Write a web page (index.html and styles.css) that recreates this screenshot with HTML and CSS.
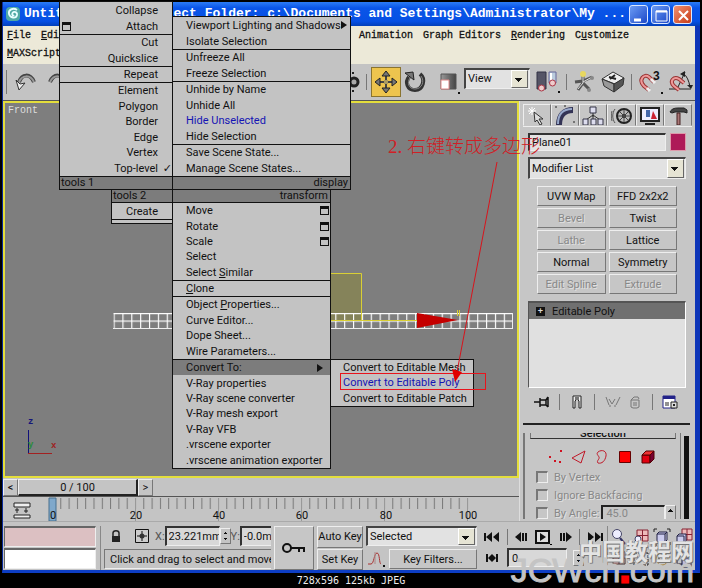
FILE: index.html
```html
<!DOCTYPE html>
<html lang="en">
<head>
<meta charset="utf-8">
<title>Untitled - Project Folder</title>
<link rel="stylesheet" href="styles.css">
</head>
<body>
<div class="window">
  <header class="titlebar">
    <svg class="logo" width="16" height="16" viewBox="0 0 16 16"><rect x="1" y="1" width="14" height="14" rx="4" fill="#4fa9a5"/><path d="M12 4C8 1 3 4 4 8c1 4 7 5 8 1 .5-3-3-4-4.500-2-1 2 .5 3 1.500 2" fill="none" stroke="#e8ffff" stroke-width="1.800"/></svg>
    <span class="title-file">Untit</span>
    <span class="title-path">ject Folder: c:\Documents and Settings\Administrator\My ...</span>
    <button class="win-btn" aria-label="Minimize"><svg width="19" height="19"><path d="M4 14h7" stroke="#fff" stroke-width="3"/></svg></button>
    <button class="win-btn" aria-label="Maximize"><svg width="19" height="19"><path d="M4 5h11v10H4z" fill="none" stroke="#fff"/><path d="M4 5.500h11" stroke="#fff" stroke-width="2"/></svg></button>
    <button class="win-btn close" aria-label="Close"><svg width="19" height="19"><path d="M5 5l9 9M14 5l-9 9" stroke="#fff" stroke-width="2"/></svg></button>
  </header>
  <nav class="menubar">
    <div class="menus menus-left">
      <a href="#"><u>F</u>ile</a><a href="#"><u>E</u>dit</a><a href="#" class="wrap"><u>M</u>AXScript</a>
    </div>
    <div class="menus"><a href="#">Animation</a><a href="#">Graph Editors</a><a href="#"><u>R</u>endering</a><a href="#">C<u>u</u>stomize</a></div>
  </nav>
  <div class="toolbar">
    <div class="tools-left">
      <button class="tool" aria-label="Undo"><svg width="24" height="24" viewBox="0 0 24 24"><path d="M5 12C8 4 16 3 20 12" fill="none" stroke="#444" stroke-width="4"/><path d="M5 12C8 5 16 4 20 12" fill="none" stroke="#999" stroke-width="2"/><path d="M2 10l3 10 6-7-5 1z" fill="#eee" stroke="#333"/></svg></button>
      <button class="tool" aria-label="Redo"><svg width="24" height="24" viewBox="0 0 24 24"><path d="M3 12C7 3 15 4 18 12" fill="none" stroke="#444" stroke-width="4"/><path d="M3 12C7 4 15 5 18 12" fill="none" stroke="#999" stroke-width="2"/><path d="M21 10l-3 10-6-7 5 1z" fill="#eee" stroke="#333"/></svg></button>
    </div>
    <svg class="gear" width="14" height="24" viewBox="0 0 14 24"><circle cx="6" cy="12" r="4" fill="#aaa" stroke="#222" stroke-width="3"/><path d="M0 3h2M4 3h2M0 21h2M4 21h2" stroke="#222" stroke-width="2"/></svg>
    <i class="sep"></i>
    <button class="tool active" aria-label="Select and Move"><svg width="24" height="24" viewBox="0 0 24 24"><path d="M12 3v18M3 12h18" stroke="#444" stroke-width="2"/><path d="M12 1l4 5H8zM12 23l4-5H8zM1 12l5-4v8zM23 12l-5-4v8z" fill="#777" stroke="#222"/><path d="M10 10h4v4h-4z" fill="#aa9a60"/></svg></button>
    <button class="tool" aria-label="Select and Rotate"><svg width="24" height="24" viewBox="0 0 24 24"><path d="M17 4c6 5 3 16-5 16S2 12 6 7" fill="none" stroke="#333" stroke-width="4"/><path d="M18 6c4 5 1 13-6 13S4 12 7 8" fill="none" stroke="#888"/><path d="M2 3l8-1 1 8z" fill="#777" stroke="#222"/></svg></button>
    <button class="tool scale" aria-label="Select and Scale"><svg width="24" height="24" viewBox="0 0 24 24"><defs><linearGradient id="g1"><stop offset="0" stop-color="#999"/><stop offset="1" stop-color="#444"/></linearGradient></defs><path d="M4 4h15v15H4z" fill="url(#g1)" stroke="#555"/><path d="M4 10h8v9H4z" fill="#fff" stroke="#d88"/><path d="M21 22h2v2h-2z" fill="#111"/></svg></button>
    <label class="combo view"><select aria-label="Reference Coordinate System"><option>View</option></select></label>
    <button class="tool" aria-label="Pivot Center"><svg width="24" height="24" viewBox="0 0 24 24"><path d="M1 2h9v17H1z" fill="#556" stroke="#334"/><path d="M13 2h7v11h-7z" fill="#bcd" stroke="#669"/><path d="M15 3v9" stroke="#fff" stroke-width="2"/><circle cx="5.500" cy="18" r="3" fill="#ecc" stroke="#a34"/><circle cx="16.500" cy="13" r="3" fill="#ecc" stroke="#a34"/><path d="M22 21h2v2h-2z" fill="#111"/></svg></button>
    <i class="sep"></i>
    <button class="tool" aria-label="Manipulate"><svg width="24" height="24" viewBox="0 0 24 24"><path d="M10 4v9l-5 7M10 13l6 6M2 12l8-1 9-4" fill="none" stroke="#555" stroke-width="3"/><path d="M10 5v8l-5 6M10 12l9-5" fill="none" stroke="#ddd"/><circle cx="10" cy="4" r="3" fill="#e8d860"/><circle cx="19" cy="8" r="2" fill="#888"/><circle cx="16" cy="20" r="2" fill="#888"/></svg></button>
    <button class="tool" aria-label="Keyboard Override"><svg width="24" height="24" viewBox="0 0 24 24"><path d="M1 9l11-7 11 6-9 6z" fill="#eee" stroke="#333"/><path d="M1 9l12 5v8L3 16z" fill="#999" stroke="#333"/><path d="M13 14l10-6-1 7-9 7z" fill="#555" stroke="#333"/><path d="M8 7l7 2M14 5l-5 4" stroke="#222" stroke-width="2"/></svg></button>
    <i class="sep"></i>
    <button class="tool" aria-label="Snaps Toggle"><svg width="26" height="24" viewBox="0 0 26 24"><path d="M11 20l-5-4C0 10 6 3 11 7l5 5" fill="none" stroke="#933" stroke-width="4"/><path d="M11 20l-5-4C0 10 6 3 11 7l5 5" fill="none" stroke="#e99" stroke-width="2"/><path d="M13 9l4 4M9 18l3 3" stroke="#eee" stroke-width="3"/><text x="15" y="10" class="snap3">3</text><path d="M23 22h2v2h-2z" fill="#111"/></svg></button>
    <button class="tool" aria-label="Angle Snap"><svg width="26" height="24" viewBox="0 0 26 24"><path d="M1 19h22M10 17L17 2M15 3c4 3 6 8 7 14" fill="none" stroke="#222"/><path d="M11 20l-5-4C1 11 6 6 11 9l5 4" fill="none" stroke="#933" stroke-width="4"/><path d="M11 20l-5-4C1 11 6 6 11 9l5 4" fill="none" stroke="#e99" stroke-width="2"/><path d="M12 4l5-3v6zM19 15l6 0-2 4z" fill="#222"/></svg></button>
  </div>

  <div class="main">
    <div class="left">
      <section class="viewport">
        <span class="vp-name">Front</span>
        <svg class="scene" width="512" height="374" viewBox="5 103 512 374">
          <defs><pattern id="cells" x="113.500" y="313" width="8.870" height="7.500" patternUnits="userSpaceOnUse"><path d="M0 .5h8.870M.5 0v7.500" stroke="#fff" stroke-width="1.300" fill="none"/></pattern></defs>
          <path d="M300 273.500h61.500v47H300z" fill="#85835a" stroke="#d9cf35"/>
          <path d="M113.500 313h399v15h-399z" fill="url(#cells)"/>
          <path d="M113 328.500h400M512.500 313v15" stroke="#eee"/>
          <path d="M331 320.500h86M361.500 313v8M457.500 310v6M459.500 310v6" stroke="#d9cf35"/>
          <path d="M417 313v15l41-8z" fill="#c40000"/>
          <path d="M28.500 430v23" stroke="#11117a"/><path d="M28 453.500h24" stroke="#a32020"/>
          <text x="28" y="424" class="axis z">z</text><text x="28" y="447" class="axis y">y</text><text x="51" y="448" class="axis x">x</text>
        </svg>
      </section>
      <div class="slider"><button>&lt;</button><button class="thumb">0 / 100</button><button>&gt;</button></div>
      <div class="ruler">
        <svg width="510" height="25" viewBox="4 497 510 25">
          <defs><pattern id="ticks" x="53" y="498" width="8.300" height="11" patternUnits="userSpaceOnUse"><path d="M.5 0v11" stroke="#777"/></pattern></defs>
          <path d="M15 503h16v4H15zM15 515h16v3H15z" fill="#eee" stroke="#222"/><path d="M18 508v5M16 510h4M27 508v5M25 511h4" stroke="#222"/>
          <path d="M53 498h417v11H53z" fill="url(#ticks)"/>
          <path d="M136.500 498v23M219.500 498v23M302.500 498v23M385.500 498v23M468.500 498v23" stroke="#999"/>
          <path d="M50 498h7v23h-7z" fill="#7fa8cb" stroke="#48708f"/>
          <g class="nums"><text x="54" y="519">0</text><text x="137" y="519">20</text><text x="220" y="519">40</text><text x="303" y="519">60</text><text x="387" y="519">80</text><text x="469" y="519">100</text></g>
        </svg>
      </div>
    </div>

    <aside class="panel">
      <div class="tabs">
        <button aria-label="Create"><svg width="22" height="22" viewBox="0 0 22 22"><path d="M6 2v8M2 6h8M3 3l6 6M9 3L3 9" stroke="#fff"/><path d="M8 7l9 7-4 0 3 5-2 1-3-5-2 2z" fill="#ddd" stroke="#333"/></svg></button>
        <button class="on" aria-label="Modify"><svg width="22" height="22" viewBox="0 0 22 22"><path d="M5 20C5 10 10 5 19 5" fill="none" stroke="#335" stroke-width="6"/><path d="M4 19C4 9 9 4 18 4" fill="none" stroke="#9ac" stroke-width="2"/><path d="M1 2h2M10 1h2M19 17h2" stroke="#222"/></svg></button>
        <button aria-label="Hierarchy"><svg width="22" height="22" viewBox="0 0 22 22"><path d="M11 8v4M4 15l7-5 7 5M11 10v6" fill="none" stroke="#333"/><path d="M8 2h6v6H8zM1 14h5v6H1zM9 14h5v6H9zM16 14h5v6h-5z" fill="#dde" stroke="#334"/></svg></button>
        <button aria-label="Motion"><svg width="22" height="22" viewBox="0 0 22 22"><circle cx="13" cy="11" r="7" fill="#bbb" stroke="#222" stroke-width="2"/><circle cx="13" cy="11" r="2" fill="#222"/><path d="M13 5v12M7 11h12M9 7l8 8M17 7l-8 8" stroke="#444"/><path d="M4 4c-3 4-3 10 0 14M1 6c-1 3-1 7 0 10" fill="none" stroke="#555"/></svg></button>
        <button aria-label="Display"><svg width="22" height="22" viewBox="0 0 22 22"><path d="M2 3h18v13H2z" fill="#eef" stroke="#222" stroke-width="2"/><path d="M6 19h10" stroke="#222" stroke-width="2"/><path d="M7 5h4v7H7z" fill="#46a"/><path d="M14 6l4 8h-6z" fill="#c23"/></svg></button>
        <button aria-label="Utilities"><svg width="22" height="22" viewBox="0 0 22 22"><path d="M3 7c2-4 6-4 9-4h5l3 2v3l-3-1H8L5 8z" fill="#444" stroke="#222"/><path d="M10 8h3v12h-3z" fill="#a77" stroke="#422"/></svg></button>
      </div>
      <div class="namerow"><input aria-label="Object name" value="Plane01"><button class="swatch" aria-label="Object color"></button></div>
      <label class="combo mod"><select aria-label="Modifier List"><option>Modifier List</option></select></label>
      <div class="modset">
        <button>UVW Map</button><button>FFD 2x2x2</button>
        <button disabled>Bevel</button><button>Twist</button>
        <button disabled>Lathe</button><button>Lattice</button>
        <button>Normal</button><button>Symmetry</button>
        <button disabled>Edit Spline</button><button disabled>Extrude</button>
      </div>
      <div class="stack"><div class="stack-row"><span class="plus">+</span>Editable Poly</div></div>
      <div class="stacktools">
        <button aria-label="Pin Stack"><svg width="18" height="16" viewBox="0 0 18 16"><path d="M1 8h6M7 4v9M7 6h6v5H7M15 3v10M13 6l2-3M13 11l2 2" fill="none" stroke="#111" stroke-width="1.500"/></svg></button><i class="sep"></i>
        <button aria-label="Show End Result"><svg width="18" height="16" viewBox="0 0 18 16"><path d="M5 2h8v12h-2V7L9 5 7 7v7H5z" fill="#eee" stroke="#222"/><path d="M7 3h4v3H7z" fill="#777"/></svg></button><i class="sep"></i>
        <button aria-label="Make Unique"><svg width="18" height="16" viewBox="0 0 18 16"><path d="M2 3l3 8M16 3l-4 8M5 5l3 5 3-5M5 12h2M10 12h2" fill="none" stroke="#777"/></svg></button>
        <button aria-label="Remove Modifier"><svg width="18" height="16" viewBox="0 0 18 16"><path d="M5 6h8v7l-2 1H7l-2-1zM5 6l3-3h4l1 2M7 9h4M7 11h4" fill="none" stroke="#777"/></svg></button><i class="sep"></i>
        <button aria-label="Configure Modifier Sets"><svg width="18" height="16" viewBox="0 0 18 16"><path d="M2 2h12v12H2z" fill="#fff" stroke="#228"/><path d="M2 3.500h12" stroke="#228" stroke-width="3"/><path d="M4 9h4M4 11h4M10 8h6v6h-6z" fill="#ddd" stroke="#222"/><path d="M12 10h2v2h-2z" fill="#222"/></svg></button>
      </div>
      <div class="rollouts">
        <div class="rollout">
          <h2>Selection</h2>
          <div class="subobj">
            <button aria-label="Vertex"><svg width="16" height="16"><path d="M1 7h2v2H1zM12 1h2v2h-2zM6 11h2v2H6zM11 12h2v2h-2z" fill="#d01020"/></svg></button>
            <button aria-label="Edge"><svg width="16" height="16"><path d="M1 9L14 2l-4 12z" fill="none" stroke="#c01828"/></svg></button>
            <button aria-label="Border"><svg width="16" height="16"><path d="M4 3c4-3 9-1 8 4s-4 8-8 7c-2-2 2-4 1-6S2 5 4 3z" fill="none" stroke="#c01828"/></svg></button>
            <button aria-label="Polygon"><svg width="16" height="16"><path d="M2.500 2.500h11v11h-11z" fill="#f00" stroke="#600"/></svg></button>
            <button aria-label="Element"><svg width="16" height="16"><path d="M2 6h8v8H2z" fill="#e00010" stroke="#500"/><path d="M2 6l4-4h8l-4 4z" fill="#e33" stroke="#500"/><path d="M10 6l4-4v8l-4 4z" fill="#703" stroke="#500"/></svg></button>
          </div>
          <label class="check"><input type="checkbox" disabled>By Vertex</label>
          <label class="check"><input type="checkbox" disabled>Ignore Backfacing</label>
          <div class="check"><input type="checkbox" id="ang" disabled><label for="ang">By Angle:</label><input class="spin" aria-label="Angle" value="45.0" disabled><span class="arrows"></span></div>
        </div>
        <div class="scroll"></div>
      </div>
    </aside>
  </div>

  <footer class="status">
    <div class="listener"><input class="pink" aria-label="Macro recorder"><input aria-label="Listener"></div>
    <div class="coords">
      <div class="xyz">
        <button aria-label="Lock Selection"><svg width="12" height="14"><path d="M3 7V4c0-3 6-3 6 0v3" fill="none" stroke="#222" stroke-width="1.500"/><path d="M2 7h8v6H2z" fill="#222"/></svg></button>
        <button class="abs" aria-label="Absolute Mode"><svg width="14" height="14"><path d="M.5.5h13v13H.5z" fill="#ccc" stroke="#111"/><path d="M7 2v10M2 7h10" stroke="#111"/><circle cx="7" cy="7" r="2.500" fill="#333"/></svg></button>
        <label for="cx">X:</label><input id="cx" value="23.221mm"><span class="arrows two"></span><label for="cy">Y:</label><input id="cy" value="-0.0mm">
      </div>
      <div class="prompt">Click and drag to select and move objects</div>
    </div>
    <button class="bigkey" aria-label="Set Keys"><svg width="26" height="14"><circle cx="6" cy="7" r="4" fill="none" stroke="#111" stroke-width="2"/><path d="M10 7h14M18 7v4M23 7v4" stroke="#111" stroke-width="2"/></svg></button>
    <div class="keys"><button>Auto Key</button><button>Set Key</button></div>
    <div class="filters">
      <label class="combo"><select aria-label="Selection set"><option>Selected</option></select></label>
      <div class="frow"><button class="plain" aria-label="Default Tangents"><svg width="20" height="18"><path d="M2 14h3C8 14 8 3 11 3s2 11 4 11" fill="none" stroke="#a33"/><path d="M9 2v12" stroke="#a88"/><path d="M17 15h2v2h-2z" fill="#111"/></svg></button><button class="kf">Key Filters...</button></div>
    </div>
    <div class="play">
      <div class="prow">
        <button aria-label="Go to Start"><svg width="18" height="12"><path d="M2 2v8" stroke="#111" stroke-width="2"/><path d="M9 1v10L3 6zM16 1v10L10 6z" fill="#111"/></svg></button><i class="sep"></i>
        <button aria-label="Previous Frame"><svg width="14" height="12"><path d="M7 1v10L1 6z" fill="#111"/><path d="M9 2v8M12 2v8" stroke="#111" stroke-width="2"/></svg></button>
        <button aria-label="Play"><svg width="18" height="16"><path d="M2 2h13v12H2z" fill="#ddd" stroke="#111" stroke-width="2"/><path d="M6 4v8l6-4z" fill="#111"/><path d="M16 15h2v1h-2z"/></svg></button>
        <button aria-label="Next Frame"><svg width="14" height="12"><path d="M7 1v10l6-5z" fill="#111"/><path d="M2 2v8M5 2v8" stroke="#111" stroke-width="2"/></svg></button><i class="sep"></i>
        <button aria-label="Go to End"><svg width="18" height="12"><path d="M16 2v8" stroke="#111" stroke-width="2"/><path d="M2 1v10l6-5zM9 1v10l6-5z" fill="#111"/></svg></button>
      </div>
      <div class="prow"><button aria-label="Key Mode"><svg width="18" height="12"><path d="M4 2v8M14 2v8" stroke="#111" stroke-width="2"/><path d="M9 2v8L5 6zM9 2v8l4-4z" fill="#111"/></svg></button><input class="frame" aria-label="Current frame" value="0"><span class="arrows two"></span></div>
    </div>
    <div class="nav">
      <button aria-label="Zoom"><svg width="18" height="18"><circle cx="7" cy="6" r="4.500" fill="#eef" stroke="#446"/><path d="M10 10l5 6" stroke="#336" stroke-width="2"/></svg></button>
      <button aria-label="Zoom All"><svg width="18" height="18"><path d="M5 2h11v11H5zM10.500 2v11M5 7.500h11" fill="#ebb" stroke="#823"/><circle cx="6" cy="11" r="3" fill="#eef" stroke="#446"/><path d="M4 13l-2 3" stroke="#336" stroke-width="2"/></svg></button>
      <button aria-label="Zoom Extents"><svg width="18" height="18"><path d="M4 6h8v8H4zM4 6l2-2h8l-2 2M12 14l2-2V4" fill="#cce" stroke="#224"/><path d="M1 4V1h3M14 1h3v3M1 14v3h3M17 14v3h-3" fill="none" stroke="#222"/></svg></button>
      <button aria-label="Zoom Extents All"><svg width="18" height="18"><path d="M7 1h10v11H7zM12 1v11M7 6.500h10" fill="#ebb" stroke="#823"/><path d="M2 8h7v7H2zM2 8l2-2h7v7l-2 2" fill="#cce" stroke="#224"/></svg></button>
      <button aria-label="Region Zoom"><svg width="18" height="18"><path d="M3 2h12v12H3zM9 2v12M3 8h12" fill="#ebb" stroke="#433"/></svg></button>
      <button aria-label="Pan"><svg width="18" height="18"><path d="M2 3h14v12H2z" fill="#ccc" stroke="#222" stroke-dasharray="3 1"/></svg></button>
      <button aria-label="Arc Rotate"><svg width="18" height="18"><circle cx="9" cy="9" r="6" fill="none" stroke="#a84"/><path d="M6 6h6v6H6z" fill="#ccc" stroke="#222"/></svg></button>
      <button aria-label="Min/Max"><svg width="18" height="18"><path d="M2 2h12v12H2z" fill="none" stroke="#113"/><path d="M7 8h9v9H7z" fill="#bbd" stroke="#113"/></svg></button>
    </div>
  </footer>

  <div class="quad">
    <div class="box tools1">
      <ul class="rows2"><li><button>Collapse</button></li><li><i class="opt"></i><button>Attach</button></li></ul>
      <ul class="rows2"><li><button>Cut</button></li><li><button>Quickslice</button></li></ul>
      <ul class="rows1"><li><button>Repeat</button></li></ul>
      <ul class="rows6"><li><button>Element</button></li><li><button>Polygon</button></li><li><button>Border</button></li><li><button>Edge</button></li><li><button>Vertex</button></li><li class="checked"><button>Top-level</button></li></ul>
      <div class="cap">tools 1</div>
    </div>
    <div class="box display">
      <ul class="rows2"><li><button>Viewport Lighting and Shadows</button><i class="arrow near"></i></li><li><button>Isolate Selection</button></li></ul>
      <ul class="rows2"><li><button>Unfreeze All</button></li><li><button>Freeze Selection</button></li></ul>
      <ul class="rows4"><li><button>Unhide by Name</button></li><li><button>Unhide All</button></li><li class="hot"><button>Hide Unselected</button></li><li><button>Hide Selection</button></li></ul>
      <ul class="rows2"><li><button>Save Scene State...</button></li><li><button>Manage Scene States...</button></li></ul>
      <div class="cap end">display</div>
    </div>
    <div class="box tools2">
      <div class="cap">tools 2</div>
      <ul class="rows1"><li><button>Create</button></li></ul>
      <div class="tail"></div>
    </div>
    <div class="box transform">
      <div class="cap end">transform</div>
      <ul class="rows5"><li><button>Move</button><i class="opt"></i></li><li><button>Rotate</button><i class="opt"></i></li><li><button>Scale</button><i class="opt"></i></li><li><button>Select</button></li><li><button>Select <u>S</u>imilar</button></li></ul>
      <ul class="rows1"><li><button><u>C</u>lone</button></li></ul>
      <ul class="rows4"><li><button>Object <u>P</u>roperties...</button></li><li><button>Curve Editor...</button></li><li><button>Dope Sheet...</button></li><li><button>Wire Parameters...</button></li></ul>
      <ul class="rows7">
        <li class="open"><button>Convert To:</button><i class="arrow"></i>
          <ul class="submenu"><li><button>Convert to Editable Mesh</button></li><li class="hot"><button>Convert to Editable Poly</button></li><li><button>Convert to Editable Patch</button></li></ul>
        </li>
        <li><button>V-Ray properties</button></li><li><button>V-Ray scene converter</button></li><li><button>V-Ray mesh export</button></li><li><button>V-Ray VFB</button></li><li><button>.vrscene exporter</button></li><li><button>.vrscene animation exporter</button></li>
      </ul>
    </div>
  </div>

  <svg class="marks" width="702" height="588">
    <rect x="340.500" y="373.500" width="145" height="16" fill="none" stroke="#e8141c"/>
    <path d="M497 162L457 372" fill="none" stroke="#d8141c"/><path d="M452 369l10 3-7 10z" fill="#e00000"/>
    <text x="388" y="153" class="note">2. 右键转成多边形</text>
  </svg>
</div>
<div class="imginfo">728x596 125kb JPEG</div>
<div class="watermark"><span class="wm-cn">中国教程网</span><span class="wm-en">JCWch<b>.</b>com</span></div>
</body>
</html>
```
FILE: styles.css
```css
* { box-sizing: border-box; }
body {
  margin: 0;
  min-height: 100vh;
  position: relative;
  display: flex;
  flex-direction: column;
  background: #000;
  color: #111;
  font: 11px/13px Roboto, "Liberation Sans", sans-serif;
  overflow: hidden;
}
button, input, select { font: inherit; color: inherit; margin: 0; padding: 0; border: 0; border-radius: 0; background: none; min-width: 0; }
ul { list-style: none; margin: 0; padding: 0; }
svg { display: block; flex: none; }
.window {
  position: relative;
  flex: 1;
  display: flex;
  flex-direction: column;
  margin: 2px 2px 0 2px;
  background: #c4c4c4;
  border-left: 1px solid #0a2a9a;
  border-right: 5px solid #0d35b8;
  border-bottom: 3px solid #0d3ec4;
}

/* title and menus */
.titlebar {
  display: flex;
  align-items: center;
  height: 24px;
  margin-right: -5px;
  padding: 0 8px 0 2px;
  gap: 3px;
  background: linear-gradient(#2b7cf5, #0a55e8 25%, #0650e4 80%, #0440b8);
  color: #fff;
  font: bold 13px/18px "Liberation Mono", monospace;
  white-space: pre;
}
.title-file { width: 134px; }
.title-path { flex: 1; display: flex; justify-content: flex-end; }
.win-btn { width: 19px; height: 19px; flex: none; border: 1px solid #dde8ff; border-radius: 3px; background: linear-gradient(135deg, #6c9cf4, #1c48c8); display: grid; place-items: center; }
.win-btn.close { background: linear-gradient(135deg, #f09070, #c83c18); }
.menubar {
  display: grid;
  grid-template-columns: 356px 1fr;
  height: 38px;
  background: #ece9d8;
  font: 10px/18px "Liberation Mono", monospace;
}
.menus { display: flex; flex-wrap: wrap; align-content: flex-start; gap: 0 10px; padding-top: 1px; }
.menus-left { padding-left: 4px; }
.menus-left .wrap { flex-basis: 100%; }
.menus a { color: #111; text-decoration: none; -webkit-text-stroke: 0.300px #111; }

/* main toolbar */
.toolbar {
  display: flex;
  align-items: center;
  height: 37px;
  background: #c3c3c3;
  border-bottom: 1px solid #555;
}
.tools-left { display: flex; gap: 5px; flex: 0 0 345px; padding-left: 9px; box-shadow: inset 3px 0 #c3c3c3, inset 4px 0 #777; }
.tool { padding: 0 2px; flex: none; }
.tool.active { padding: 2px; background: #edc44e; border: 1px solid #8a7430; }
.tool.scale { padding-left: 8px; }
.snap3 { font: bold 12px "Liberation Sans", sans-serif; fill: #111; }
.sep { flex: none; width: 1px; height: 16px; background: #777; margin: 0 4px; }
.combo { position: relative; display: block; flex: none; background: #e2e2e2; border: 1px solid #eee; border-top: 2px solid #444; border-left: 2px solid #444; height: 21px; }
.combo select { appearance: none; width: 100%; height: 100%; padding-left: 2px; display: block; }
.combo::after { content: ""; position: absolute; right: 1px; top: 0; bottom: 0; width: 15px; background: linear-gradient(#111, #111) 3px 7px/7px 1px no-repeat, linear-gradient(#111, #111) 4px 8px/5px 1px no-repeat, linear-gradient(#111, #111) 5px 9px/3px 1px no-repeat, linear-gradient(#111, #111) 6px 10px/1px 1px no-repeat, #e6e4d4; border: 1px solid; border-color: #fff #666 #666 #fff; pointer-events: none; }
.view { width: 66px; margin: -8px 4px 0 1px; }

/* viewport and track bar */
.main { flex: 1; display: grid; grid-template-columns: 1fr 176px; }
.left { display: flex; flex-direction: column; min-width: 0; }
.viewport { position: relative; flex: 1; border: 2px solid #e4de3c; background: #7e7e7e; overflow: hidden; }
.vp-name { display: block; padding: 3px; font: 10px/10px "Liberation Mono", monospace; color: #ddd; }
.scene { position: absolute; left: 0; top: 0; }
.axis { font: bold 9px "Liberation Mono", monospace; }
.axis.x { fill: #a02020; } .axis.y { fill: #2a8a3a; } .axis.z { fill: #15157a; }
.slider { display: flex; height: 18px; padding-top: 1px; }
.slider button { width: 15px; border: 1px solid; border-color: #eee #777 #777 #eee; }
.slider .thumb { width: 120px; border-color: #eee #222 #222 #eee; border-right-width: 2px; border-bottom-width: 2px; }
.ruler { height: 25px; border-top: 1px solid #555; overflow: hidden; }
.nums { text-anchor: middle; font: 11px Roboto, sans-serif; fill: #111; }

/* command panel */
.panel { padding: 3px 3px 0 3px; border-left: 1px solid #ddd; background: #c6c6c6; display: flex; flex-direction: column; min-width: 0; }
.tabs { display: grid; grid-template-columns: repeat(6, 1fr); height: 23px; border-bottom: 1px solid #eee; }
.tabs button { display: grid; place-items: center; border: 1px solid; border-color: #eee #777 transparent #eee; overflow: hidden; }
.namerow { display: flex; gap: 4px; height: 18px; margin: 6px 6px 0 5px; }
.namerow input { flex: 1; padding-left: 2px; background: #e2e2e2; border: 1px solid #eee; border-top: 2px solid #333; border-left: 2px solid #333; }
.swatch { width: 16px; background: #ae1a58; border: 1px solid #d9a; }
.mod { margin: 6px 6px 0 5px; height: 22px; }
.modset { display: grid; grid-template-columns: 1fr 1fr; grid-auto-rows: 20px; gap: 2px 3px; margin: 7px 15px 0 14px; }
.modset button, .keys button, .kf, .bigkey { border: 1px solid; border-color: #eee #777 #777 #eee; background: #c6c6c6; }
.modset button:disabled { color: #888; text-shadow: 1px 1px #e0e0e0; }
.stack { height: 87px; margin: 7px 6px 0 5px; background: #e0e0e0; border: 1px solid #fff; border-top: 2px solid #555; border-left: 1px solid #555; }
.stack-row { display: flex; align-items: center; height: 16px; gap: 7px; padding-left: 7px; background: #707070; }
.plus { width: 9px; height: 9px; background: #111; color: #ddd; font: bold 9px/8px "Liberation Sans", sans-serif; text-align: center; }
.stacktools { display: flex; align-items: center; justify-content: space-between; height: 28px; padding: 0 13px 0 10px; }
.rollouts { display: flex; height: 96px; margin: 7px 2px 0 0; padding-top: 8px; border-top: 2px solid #222; overflow: hidden; }
.rollout { flex: 1; border-left: 2px solid #777; border-right: 1px solid #777; padding: 0 4px 0 5px; overflow: hidden; }
.rollout h2 { margin: 0; height: 6px; line-height: 2px; font-size: 11px; font-weight: 500; text-align: center; border: 1px solid #777; border-top: 0; border-bottom-color: #333; overflow: hidden; }
.scroll { width: 5px; margin: 3px 1px 0 3px; background: #111; }
.subobj { display: flex; gap: 7px; padding: 6px 0 0 18px; height: 29px; }
.check { display: flex; align-items: center; gap: 6px; height: 18px; padding-left: 6px; color: #888; text-shadow: 1px 1px #e0e0e0; white-space: nowrap; }
.check input[type="checkbox"] { appearance: none; width: 12px; height: 12px; flex: none; border: 1px solid #eee; border-top: 2px solid #777; border-left: 2px solid #777; }
.check .spin { flex: 1; height: 16px; padding-left: 3px; border: 1px solid #eee; border-top: 2px solid #222; border-left: 2px solid #222; margin-left: -4px; }
.arrows { flex: none; width: 11px; height: 16px; margin-left: -6px; border: 1px solid; border-color: #eee #777 #777 #eee; background: linear-gradient(#111, #111) 4px 3px/1px 1px no-repeat, linear-gradient(#111, #111) 3px 4px/3px 1px no-repeat, linear-gradient(#111, #111) 2px 5px/5px 1px no-repeat; }
.arrows.two { margin: 0; background: linear-gradient(#111, #111) 4px 3px/1px 1px no-repeat, linear-gradient(#111, #111) 3px 4px/3px 1px no-repeat, linear-gradient(#111, #111) 3px 9px/3px 1px no-repeat, linear-gradient(#111, #111) 4px 10px/1px 1px no-repeat; }

/* status area */
.status { display: grid; grid-template-columns: 98px 167px 40px 46px 111px 1fr 88px; gap: 0 3px; height: 49px; padding-top: 4px; border-top: 1px solid #aaa; }
.listener { display: grid; grid-template-rows: 21px 21px; gap: 1px; padding: 0 4px 0 1px; border-right: 1px solid #888; }
.listener input { width: 100%; background: #fff; border: 1px solid #eee; border-top: 2px solid #666; border-left: 1px solid #666; }
.listener .pink { background: #dcc0c2; }
.coords { display: grid; grid-template-rows: 20px 20px; gap: 3px; overflow: hidden; }
.xyz { display: flex; align-items: center; padding-left: 6px; }
.abs { margin: 0 6px 0 13px; }
.xyz input { width: 55px; flex: none; height: 20px; padding-left: 2px; border: 1px solid #eee; border-top: 2px solid #333; border-left: 2px solid #333; background: #d8d8d8; }
.xyz label { color: #555; }
.prompt { padding: 3px 5px; border: 1px solid #777; border-bottom-color: #eee; border-right: 0; overflow: hidden; white-space: nowrap; }
.bigkey { display: grid; place-items: center; }
.keys { display: grid; grid-template-rows: 1fr 1fr; gap: 1px; white-space: nowrap; }
.filters { display: grid; grid-template-rows: 20px 20px; gap: 3px; }
.filters .combo { height: 20px; }
.frow { display: flex; gap: 3px; }
.kf { flex: 1; white-space: nowrap; }
.play { display: grid; grid-template-rows: 21px 21px; padding-left: 3px; min-width: 0; }
.prow { display: flex; align-items: center; justify-content: space-between; }
.prow .sep { margin: 0; }
.prow .arrows { margin-right: 20px; }
.frame { width: 60px; height: 19px; padding-left: 3px; background: #d8d8d8; border: 1px solid #eee; border-top: 2px solid #333; border-left: 2px solid #333; }
.nav { display: grid; grid-template-columns: repeat(4, 1fr); border-left: 1px solid #888; justify-items: center; align-items: center; }

/* quad menu */
.quad { position: absolute; left: 56px; top: -1px; display: grid; grid-template-columns: 114px 178px; align-items: end; }
.box { background: #c3c3c3; border: 1px solid #111; }
.display, .transform { margin-left: -1px; }
.tools2 { width: 62px; justify-self: end; align-self: start; border-top: 0; }
.transform { width: 159px; border-top: 0; }
.quad ul { display: grid; grid-auto-rows: 1fr; }
.box > ul + ul { border-top: 1px solid #111; }
.rows1 { height: 16px; } .rows2 { height: 32px; } .rows4 { height: 63px; } .rows5 { height: 77px; } .rows6 { height: 94px; } .rows7 { height: 109px; }
.quad li { position: relative; display: flex; align-items: center; justify-content: space-between; padding: 0 1px 0 13px; white-space: nowrap; line-height: 13px; }
.tools1 li { padding: 0 14px 0 2px; }
.tools1 button { margin-left: auto; }
.tools2 li { padding: 0 14px; }
.hot { color: #1414b4; }
.opt { width: 9px; height: 9px; border: 1px solid #111; border-top-width: 3px; }
.checked::after { content: "✓"; position: absolute; right: 0; font: bold 11px/13px "DejaVu Sans", sans-serif; }
.arrow { border: 4px solid transparent; border-left: 6px solid #111; border-right: 0; margin-right: 6px; }
.arrow.near { margin-right: 3px; }
.cap { height: 13px; padding: 0 1px; line-height: 12px; background: #7c7c7c; border-top: 1px solid #111; }
.transform .cap, .tools2 .cap { border-top: 0; border-bottom: 1px solid #111; }
.cap.end { text-align: right; padding-right: 2px; }
.tail { height: 4px; border-top: 1px solid #111; }
.quad .open { background: #7c7c7c; }
.quad .submenu { position: absolute; left: 100%; top: -1px; width: 144px; height: 48px; background: #c3c3c3; border: 1px solid #111; }
.quad .submenu li { padding-left: 12px; }

/* callout and captions */
.marks { position: absolute; left: -3px; top: -2px; pointer-events: none; }
.note { font: 19px "Liberation Serif", "Noto Sans CJK SC", serif; font-weight: 300; fill: #d02026; }
.imginfo { height: 15px; color: #eee; font: 10px/15px "DejaVu Sans Mono", monospace; text-align: center; }
.watermark { position: absolute; right: 8px; bottom: 2px; display: flex; flex-direction: column; align-items: flex-end; color: #c4c4c4; pointer-events: none; }
.wm-cn { font: bold 23px/24px "Noto Sans CJK SC", sans-serif; color: #e4e4e4; text-shadow: 1px 1px #777, -1px 0 #999; margin-bottom: -8px; }
.wm-en { font: 34px/32px "Liberation Sans", sans-serif; -webkit-text-stroke: 1px #c4c4c4; }
.wm-en b { color: #f00; -webkit-text-stroke: 3px #f00; }
```
